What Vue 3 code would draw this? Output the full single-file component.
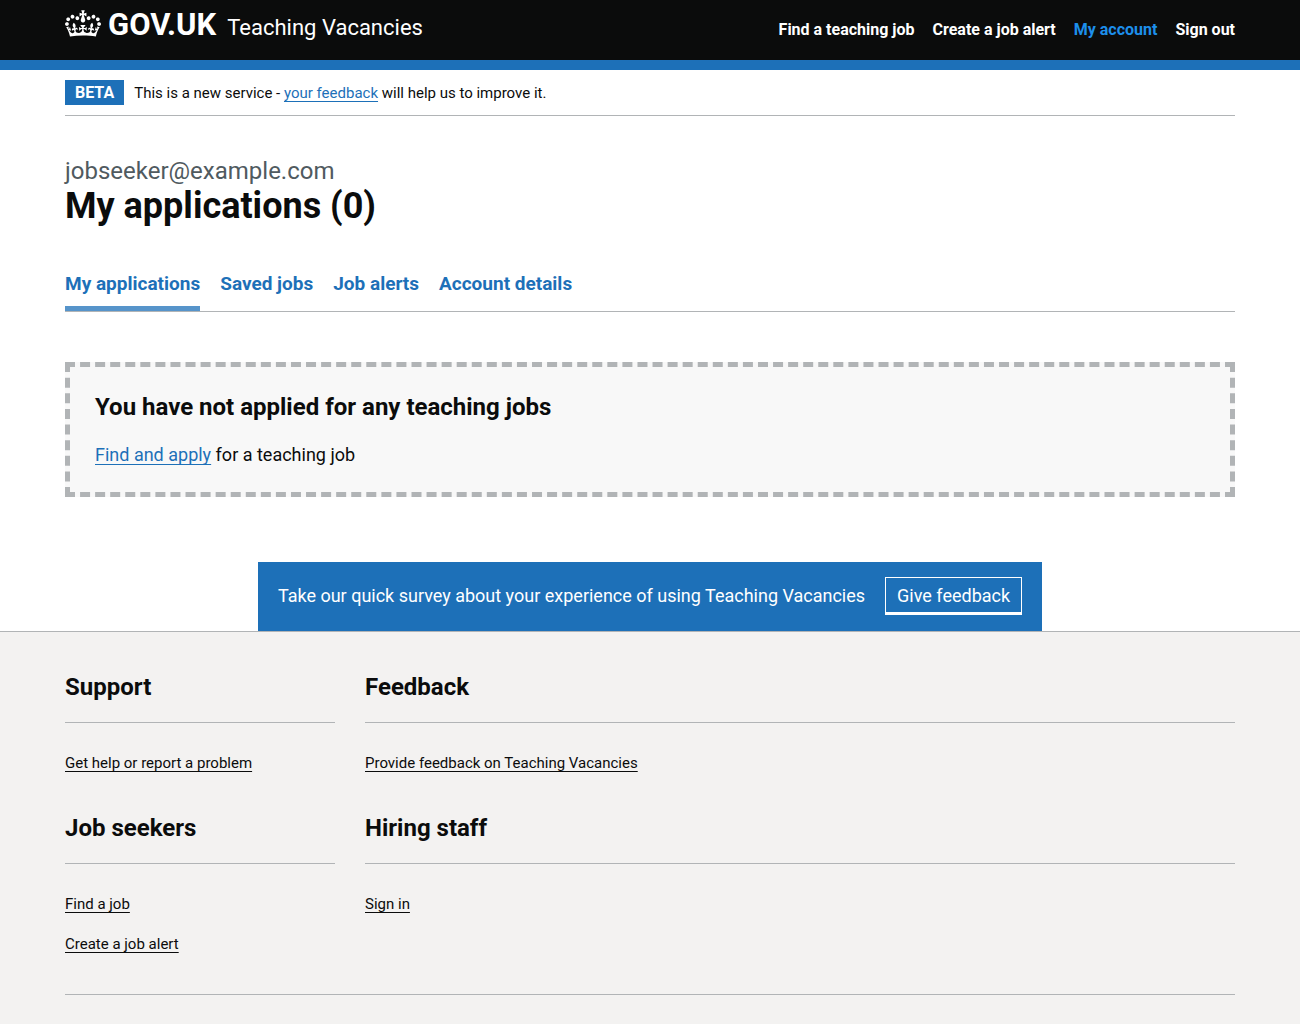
<script setup>
const navigation = [
  { label: 'Find a teaching job' },
  { label: 'Create a job alert' },
  { label: 'My account', active: true },
  { label: 'Sign out' },
]

const tabs = [
  { label: 'My applications', active: true },
  { label: 'Saved jobs' },
  { label: 'Job alerts' },
  { label: 'Account details' },
]

const footerSections = [
  { title: 'Support', links: ['Get help or report a problem'] },
  { title: 'Feedback', links: ['Provide feedback on Teaching Vacancies'] },
  { title: 'Job seekers', links: ['Find a job', 'Create a job alert'] },
  { title: 'Hiring staff', links: ['Sign in'] },
]
</script>

<template>
  <div class="page">
    <header class="header">
      <div class="container header-row">
        <div class="brand">
          <a class="logo" href="#">
            <svg class="crown" viewBox="0 0 132 97" aria-hidden="true" focusable="false">
              <path
                fill="currentColor"
                fill-rule="evenodd"
                d="M25 30.2c3.5 1.5 7.7-.2 9.1-3.7 1.5-3.6-.2-7.8-3.9-9.2-3.6-1.4-7.6.3-9.1 3.9-1.4 3.5.3 7.5 3.9 9zM9 39.5c3.6 1.5 7.8-.2 9.2-3.7 1.5-3.6-.2-7.8-3.9-9.1-3.6-1.5-7.6.2-9.1 3.8-1.4 3.5.3 7.5 3.8 9zM4.4 57.2c3.5 1.5 7.7-.2 9.1-3.8 1.5-3.6-.2-7.7-3.9-9.1-3.5-1.5-7.6.3-9.1 3.8-1.4 3.5.3 7.6 3.9 9.1zm38.3-21.4c3.5 1.5 7.7-.2 9.1-3.8 1.5-3.6-.2-7.7-3.9-9.1-3.6-1.5-7.6.3-9.1 3.8-1.3 3.6.4 7.7 3.9 9.1zm64.4-5.6c-3.6 1.5-7.8-.2-9.1-3.7-1.5-3.6.2-7.8 3.8-9.2 3.6-1.4 7.7.3 9.2 3.9 1.3 3.5-.4 7.5-3.9 9zm15.9 9.3c-3.6 1.5-7.7-.2-9.1-3.7-1.5-3.6.2-7.8 3.7-9.1 3.6-1.5 7.7.2 9.2 3.8 1.5 3.5-.3 7.5-3.8 9zm4.7 17.7c-3.6 1.5-7.8-.2-9.2-3.8-1.5-3.6.2-7.7 3.9-9.1 3.6-1.5 7.7.3 9.2 3.8 1.3 3.5-.4 7.6-3.9 9.1zM89.3 35.8c-3.6 1.5-7.8-.2-9.2-3.8-1.4-3.6.2-7.7 3.9-9.1 3.6-1.5 7.7.3 9.2 3.8 1.4 3.6-.3 7.7-3.9 9.1zM69.7 17.7l8.9 4.7V9.3l-8.9 2.8c-.2-.3-.5-.6-.9-.9L72.4 0H59.6l3.5 11.2c-.3.3-.6.5-.9.9l-8.8-2.8v13.1l8.8-4.7c.3.3.6.7.9.9l-5 15.4v.1c-.2.8-.4 1.6-.4 2.4 0 4.1 3.1 7.5 7 8.1h.2c.3 0 .7.1 1 .1.4 0 .7 0 1-.1h.2c4-.6 7.1-4.1 7.1-8.1 0-.8-.1-1.7-.4-2.4V34l-5.1-15.4c.4-.2.7-.6 1-.9zM66 92.8c16.9 0 32.8 1.1 47.1 3.2 4-16.9 8.9-26.7 14-33.5l-9.6-3.4c1 4.9 1.1 7.2 0 10.2-1.5-1.4-3-4.3-4.2-8.7L108.6 76c2.8-2 5-3.2 7.5-3.3-4.4 9.4-10 11.9-13.6 11.2-4.3-.8-6.3-4.6-5.6-7.9 1-4.7 5.7-5.9 8-.5 4.3-8.7-3-11.4-7.6-8.8 7.1-7.2 7.9-13.5 2.1-21.1-8 6.1-8.1 12.3-4.5 20.8-4.7-5.4-12.1-2.5-9.5 6.2 3.4-5.2 7.9-2 7.2 3.1-.6 4.3-6.4 7.8-13.5 7.2-10.3-.9-10.9-8-11.2-13.8 2.5-.5 7.1 1.8 11 7.3L80.2 60c-4.1 4.4-8 5.3-12.3 5.4 1.4-4.4 8-11.6 8-11.6H55.5s6.4 7.2 7.9 11.6c-4.2-.1-8-1-12.3-5.4l1.4 16.4c3.9-5.5 8.5-7.7 10.9-7.3-.3 5.8-.9 12.8-11.1 13.8-7.2.6-12.9-2.9-13.5-7.2-.7-5 3.8-8.3 7.1-3.1 2.7-8.7-4.6-11.6-9.4-6.2 3.7-8.5 3.6-14.7-4.6-20.8-5.8 7.6-5 13.9 2.2 21.1-4.7-2.6-11.9.1-7.7 8.8 2.3-5.5 7.1-4.2 8.1.5.7 3.3-1.3 7.1-5.7 7.9-3.5.7-9-1.8-13.5-11.2 2.5.1 4.7 1.3 7.5 3.3l-4.7-15.4c-1.2 4.4-2.7 7.2-4.3 8.7-1.1-3-.9-5.3 0-10.2l-9.5 3.4c5 6.9 9.9 16.7 14 33.5 14.8-2.1 30.8-3.2 47.7-3.2z"
              />
            </svg><span class="logotype">GOV.UK</span>
          </a>
          <a class="service" href="#">Teaching Vacancies</a>
        </div>
        <nav aria-label="Main">
          <ul class="nav-list">
            <li v-for="item in navigation" :key="item.label">
              <a href="#" :class="['nav-link', { active: item.active }]">{{ item.label }}</a>
            </li>
          </ul>
        </nav>
      </div>
    </header>

    <div class="container">
      <div class="phase">
        <strong class="tag">BETA</strong>
        <span>This is a new service - <a class="link" href="#">your feedback</a> will help us to improve it.</span>
      </div>

      <main class="main">
        <span class="caption">jobseeker@example.com</span>
        <h1 class="title">My applications (0)</h1>

        <nav aria-label="Account">
          <ul class="tabs">
            <li v-for="tab in tabs" :key="tab.label">
              <a href="#" :class="['tab', { active: tab.active }]">{{ tab.label }}</a>
            </li>
          </ul>
        </nav>

        <section class="empty">
          <h2 class="heading">You have not applied for any teaching jobs</h2>
          <p class="empty-text"><a class="link" href="#">Find and apply</a> for a teaching job</p>
        </section>
      </main>
    </div>

    <aside class="survey">
      <span>Take our quick survey about your experience of using Teaching Vacancies</span>
      <button class="survey-button" type="button">Give feedback</button>
    </aside>

    <footer class="footer">
      <div class="container">
        <div class="footer-grid">
          <section v-for="section in footerSections" :key="section.title" class="footer-section">
            <h2 class="heading footer-heading">{{ section.title }}</h2>
            <ul class="footer-list">
              <li v-for="label in section.links" :key="label">
                <a class="link footer-link" href="#">{{ label }}</a>
              </li>
            </ul>
          </section>
        </div>
        <hr class="footer-rule">
      </div>
    </footer>
  </div>
</template>

<style>
body {
  margin: 0;
  background: #f3f2f1;
}
</style>

<style scoped>
.page {
  display: flex;
  flex-direction: column;
  min-height: 100vh;
  background: #fff;
  color: #0b0c0c;
  font-family: Roboto, Arial, sans-serif;
  font-size: 18px;
  line-height: 25px;
}

.container {
  box-sizing: border-box;
  width: calc(100% - 60px);
  max-width: 1170px;
  margin: 0 auto;
}

ul {
  margin: 0;
  padding: 0;
  list-style: none;
}

.link {
  color: #1d70b8;
  text-decoration: underline;
  text-decoration-thickness: 1px;
  text-decoration-skip-ink: none;
  text-underline-offset: 3px;
}

.header {
  background: #0b0c0c;
  border-bottom: 10px solid #1d70b8;
  color: #fff;
}

.header-row {
  display: flex;
  align-items: flex-start;
  justify-content: space-between;
  min-height: 60px;
  padding-top: 10px;
}

.brand {
  display: flex;
  align-items: baseline;
  gap: 11px;
}

.logo {
  color: #fff;
  font-size: 31px;
  font-weight: 700;
  line-height: 30px;
  text-decoration: none;
}

.crown {
  width: 36px;
  height: 27px;
  margin-right: 7px;
  vertical-align: -2px;
}

.service {
  color: #fff;
  font-size: 22px;
  line-height: 30px;
  text-decoration: none;
}

.nav-list {
  display: flex;
  gap: 18px;
  padding-top: 6px;
}

.nav-link {
  color: #fff;
  font-size: 16px;
  font-weight: 700;
  text-decoration: none;
}

.nav-link.active {
  color: #1d8feb;
}

.phase {
  display: flex;
  align-items: baseline;
  gap: 10px;
  padding: 10px 0 9px;
  border-bottom: 1px solid #b1b4b6;
  font-size: 15px;
}

.tag {
  padding: 0 10px;
  background: #1d70b8;
  color: #fff;
  font-size: 16px;
  font-weight: 700;
}

.main {
  padding: 40px 0 65px;
}

.caption {
  display: block;
  color: #505a5f;
  font-size: 24px;
  line-height: 30px;
}

.title {
  margin: 0 0 45px;
  font-size: 36px;
  font-weight: 700;
  line-height: 40px;
}

.tabs {
  display: flex;
  gap: 20px;
  border-bottom: 1px solid #b1b4b6;
}

.tab {
  display: block;
  padding-bottom: 10px;
  border-bottom: 5px solid transparent;
  color: #1d70b8;
  font-size: 19px;
  font-weight: 700;
  text-decoration: none;
}

.tab.active {
  border-bottom-color: #5694ca;
}

.empty {
  margin-top: 50px;
  padding: 25px;
  border: 5px dashed #b1b4b6;
  background: #f8f8f8;
}

.heading {
  margin: 0;
  font-size: 24px;
  font-weight: 700;
  line-height: 30px;
}

.empty-text {
  margin: 20px 0 0;
}

.survey {
  display: flex;
  align-items: baseline;
  align-self: center;
  gap: 20px;
  padding: 15px 20px 16px;
  background: #1d70b8;
  color: #fff;
}

.survey-button {
  padding: 5px 11px 4px;
  border: 1px solid #fff;
  border-bottom-width: 3px;
  background: transparent;
  color: inherit;
  font: inherit;
  cursor: pointer;
}

.footer {
  flex: 1;
  padding: 40px 0 25px;
  border-top: 1px solid #b1b4b6;
  background: #f3f2f1;
}

.footer-grid {
  display: grid;
  grid-template-columns: 1fr 3fr;
  row-gap: 40px;
  margin: 0 -15px;
}

.footer-section {
  padding: 0 15px;
}

.footer-heading {
  padding-bottom: 20px;
  border-bottom: 1px solid #b1b4b6;
}

.footer-list {
  display: flex;
  flex-direction: column;
  gap: 20px;
  margin-top: 30px;
  font-size: 15px;
  line-height: 20px;
}

.footer-link {
  color: #0b0c0c;
}

.footer-rule {
  margin: 40px 0 0;
  border: 0;
  border-top: 1px solid #b1b4b6;
}
</style>
